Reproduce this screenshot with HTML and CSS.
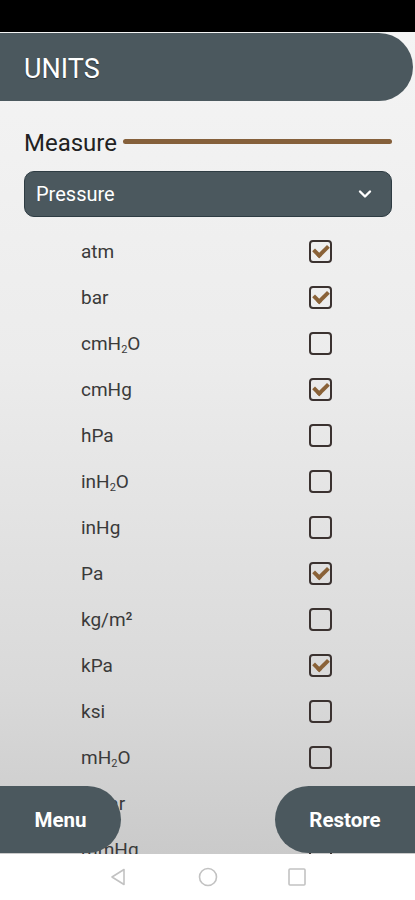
FILE: index.html
```html
<!doctype html>
<html>
<head>
<meta charset="utf-8">
<title>Units</title>
<link rel="stylesheet" href="styles.css">
</head>
<body>
<div class="status"></div>
<div class="app">
  <div class="topbar"><h1>UNITS</h1></div>
  <div class="measure">
    <span>Measure</span>
    <div class="rule"></div>
  </div>
  <div class="select">
    <span>Pressure</span>
    <svg width="14" height="10" viewBox="0 0 14 10"><path d="M2 2.5l5 5 5-5" fill="none" stroke="#fff" stroke-width="2.4" stroke-linecap="round" stroke-linejoin="round"/></svg>
  </div>
  <ul class="units">
    <li><span>atm</span><i class="box on"></i></li>
    <li><span>bar</span><i class="box on"></i></li>
    <li><span>cmH<sub>2</sub>O</span><i class="box"></i></li>
    <li><span>cmHg</span><i class="box on"></i></li>
    <li><span>hPa</span><i class="box"></i></li>
    <li><span>inH<sub>2</sub>O</span><i class="box"></i></li>
    <li><span>inHg</span><i class="box"></i></li>
    <li><span>Pa</span><i class="box on"></i></li>
    <li><span>kg/m²</span><i class="box"></i></li>
    <li><span>kPa</span><i class="box on"></i></li>
    <li><span>ksi</span><i class="box"></i></li>
    <li><span>mH<sub>2</sub>O</span><i class="box"></i></li>
    <li><span>mbar</span><i class="box"></i></li>
    <li><span>mmHg</span><i class="box"></i></li>
  </ul>
  <button class="fab menu">Menu</button>
  <button class="fab restore">Restore</button>
</div>
<div class="nav">
  <svg width="20" height="20" viewBox="0 0 20 20"><path d="M15 2.5v15L3 10z" fill="none" stroke="#c2c2c2" stroke-width="1.6" stroke-linejoin="round"/></svg>
  <svg width="22" height="22" viewBox="0 0 22 22"><circle cx="11" cy="11" r="8.5" fill="none" stroke="#c2c2c2" stroke-width="1.6"/></svg>
  <svg width="20" height="20" viewBox="0 0 20 20"><rect x="2" y="2" width="16" height="16" rx="1" fill="none" stroke="#c2c2c2" stroke-width="1.6"/></svg>
</div>
</body>
</html>
```

FILE: styles.css
```css
body{margin:0;width:415px;height:900px;overflow:hidden;font-family:Roboto,"Liberation Sans",sans-serif;background:#fff}
.status{height:32px;background:#000}
.app{position:relative;height:822px;overflow:hidden;background:linear-gradient(#f4f4f4 0%,#ececec 40%,#d9d9d9 80%,#cacaca 100%)}
.topbar{margin-top:1px;width:413px;height:68px;background:#4b585e;border-radius:0 34px 34px 0;display:flex;align-items:center}
.topbar h1{margin:3px 0 0 24px;font-size:27px;font-weight:400;color:#fff;text-shadow:0 1px 1px rgba(0,0,0,.45)}
.measure{display:flex;align-items:center;margin:28px 23px 0 24px;height:28px}
.measure span{font-size:24px;color:#222}
.rule{flex:1;height:5px;margin:-3px 0 0 6px;background:#85603b;border-radius:3px}
.select{display:flex;align-items:center;justify-content:space-between;margin:14px 23px 0 24px;height:44px;padding:0 19px 0 11px;background:#4b585e;border:1px solid #2e3c43;border-radius:10px}
.select span{font-size:20px;color:#fff}
.units{list-style:none;margin:11px 0 0;padding:0}
.units li{display:flex;align-items:center;justify-content:space-between;height:46px;padding:0 83px 0 81px}
.units span{font-size:19px;color:#3a3a3a}
.units sub{font-size:11px;vertical-align:-3px;line-height:0}
.box{display:block;width:19px;height:19px;border:2px solid #3b3230;border-radius:4px;position:relative}
.box.on::after{content:"";position:absolute;left:5px;top:0;width:6px;height:11px;border:solid #8a6238;border-width:0 4px 4px 0;transform:rotate(45deg)}
.fab{position:absolute;top:754px;height:67px;border:0;background:#4b585e;color:#fff;font-family:inherit;font-size:20.5px;font-weight:700;padding:0}
.menu{left:0;width:121px;border-radius:0 34px 34px 0}
.restore{right:0;width:140px;border-radius:34px 0 0 34px}
.nav{height:46px;background:#fff;display:flex;align-items:center;justify-content:center;gap:68px}
```
